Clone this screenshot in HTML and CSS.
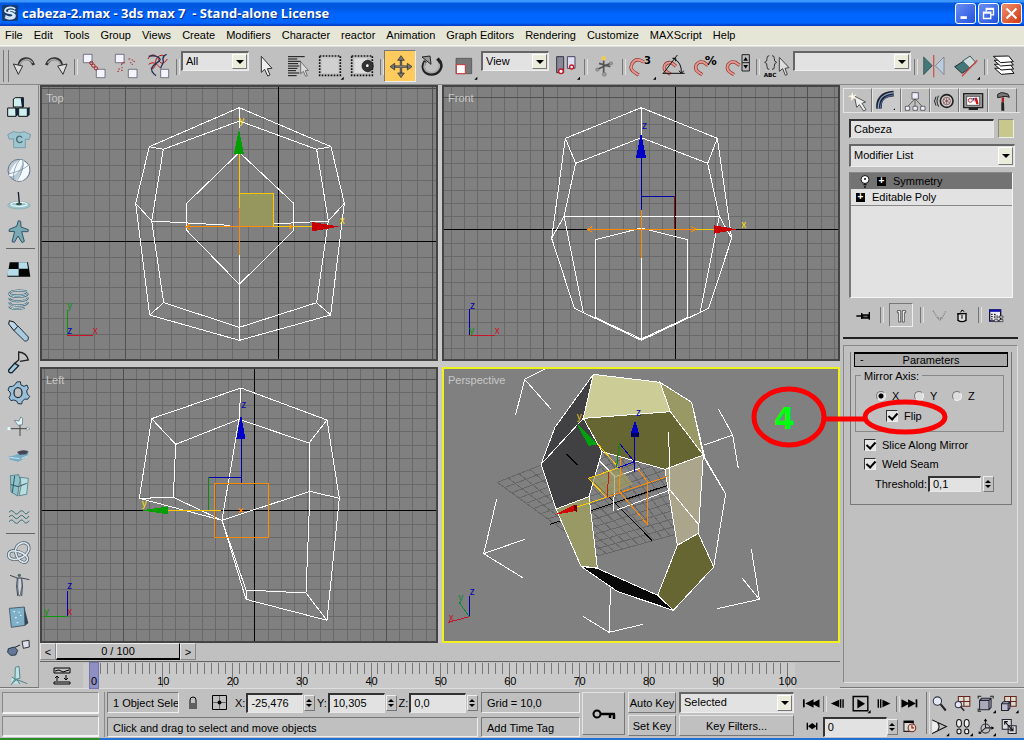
FILE: index.html
```html
<!DOCTYPE html>
<html lang="en">
<head>
<meta charset="utf-8">
<title>cabeza-2.max - 3ds max 7 - Stand-alone License</title>
<link rel="stylesheet" href="styles.css">
</head>
<body>
<div class="app">
  <header class="titlebar">
    <svg class="logo" viewBox="0 0 48 48"><rect width="48" height="48" rx="6" fill="#163c70"/><path d="M40 12C28 3 9 8 9 18c0 9 25 4 25 13 0 8-17 7-24 1M40 21c-8-7-20-6-20-2 0 4 18 3 19 13 0 10-20 13-30 5" fill="none" stroke="#d8e9f5" stroke-width="5"/></svg>
    <h1>cabeza-2.max - 3ds max 7 &nbsp;- Stand-alone License</h1>
    <button class="win" aria-label="Minimize"><svg viewBox="0 0 21 21"><path d="M5 15h7" stroke="#fff" stroke-width="3"/></svg></button>
    <button class="win" aria-label="Restore"><svg viewBox="0 0 21 21"><path d="M8 8V5h8v7h-3M5 9h8v7H5zM8 6h8M5 10h8" fill="none" stroke="#fff" stroke-width="1.5"/></svg></button>
    <button class="win close" aria-label="Close"><svg viewBox="0 0 21 21"><path d="M5 5l11 11M16 5L5 16" stroke="#fff" stroke-width="2.4"/></svg></button>
  </header>
  <nav class="menu">
    <a href="#">File</a><a href="#">Edit</a><a href="#">Tools</a><a href="#">Group</a><a href="#">Views</a><a href="#">Create</a><a href="#">Modifiers</a><a href="#">Character</a><a href="#">reactor</a><a href="#">Animation</a><a href="#">Graph Editors</a><a href="#">Rendering</a><a href="#">Customize</a><a href="#">MAXScript</a><a href="#">Help</a>
  </nav>
  <div class="toolbar">
    <button aria-label="Undo"><svg viewBox="24 147 96 96"><path d="M56 196C60 168 91 165 101 192" fill="none" stroke="#333" stroke-width="9"/><path d="M58 194C64 172 88 170 98 186" fill="none" stroke="#aaa" stroke-width="4"/><path d="M40 189l28 6-13 25z" fill="#ddd" stroke="#333" stroke-width="3"/></svg></button>
    <button aria-label="Redo"><svg viewBox="120 147 96 96"><path d="M186 196C182 168 150 165 139 192" fill="none" stroke="#333" stroke-width="9"/><path d="M183 194C178 172 154 170 143 186" fill="none" stroke="#aaa" stroke-width="4"/><path d="M201 189l-28 6 16 25z" fill="#ddd" stroke="#333" stroke-width="3"/></svg></button>
    <i class="sep"></i>
    <button aria-label="Select and link"><svg viewBox="234 147 96 96"><g fill="#f4f4ff" stroke="#445" stroke-width="2"><path d="M250 160h26v25h-26zM289 205h26v25h-26z"/></g><g fill="none" stroke="#a22" stroke-width="3"><circle cx="274" cy="186" r="5"/><circle cx="280" cy="194" r="5"/><circle cx="288" cy="202" r="5"/></g></svg></button>
    <button aria-label="Unlink selection"><svg viewBox="330 147 96 96"><g fill="#f4f4ff" stroke="#445" stroke-width="2"><path d="M346 160h26v25h-26zM385 205h26v25h-26z"/></g><path d="M364 193q0-10 11-8M385 174h6m4 3h4m-9 8h4m6-4h5m-10 9h4m-44 14h5m-8 7h5m6-3h5m-4-8h4" fill="none" stroke="#a33" stroke-width="3"/></svg></button>
    <button aria-label="Bind to space warp"><svg viewBox="426 147 96 96"><path d="M444 174c10-22 28-10 32 2 4 14 16 14 26-2M452 202c22 4 8-26 22-34 6-6 12-6 18-4M446 190c20-14 28 8 36 10" fill="none" stroke="#b11" stroke-width="3"/><path d="M446 166c14-4 30 0 34 8s-18 12-24 26c-4 8 4 18 12 24M500 160c-12 4-12 14-10 20s-6 12-8 22" fill="none" stroke="#235" stroke-width="4"/><path d="M482 205h24v25h-24z" fill="#f4f4ff" stroke="#445" stroke-width="2"/></svg></button>
    <i class="sep"></i>
    <span class="combo tb"><select aria-label="Selection filter"><option>All</option></select><i></i></span>
    <button aria-label="Select object"><svg viewBox="750 147 96 96"><path d="M784 166v48l10-9 9 20 7-3-8-19 14-1z" fill="#eee" stroke="#333" stroke-width="3"/></svg></button>
    <button aria-label="Select by name"><svg viewBox="846 147 96 96"><path d="M864 167h50M864 174h28M864 181h38M864 188h30M864 195h34M864 202h28M864 209h24M864 216h34M864 224h26" stroke="#111" stroke-width="3"/><path d="M902 182v36l8-7 7 15 5-2-6-15 9-1z" fill="#ddd" stroke="#444" stroke-width="2"/></svg></button>
    <button aria-label="Rectangular selection"><svg viewBox="942 147 96 96"><path d="M959 165h62v58h-62z" fill="#c4c4c4" stroke="#111" stroke-width="5" stroke-dasharray="5 4"/><path d="M966 172h48v44h-48z" fill="#d0d0d0"/><path d="M1031 227v9h-9z" fill="#000"/></svg></button>
    <button aria-label="Window crossing"><svg viewBox="1038 147 96 96"><path d="M1055 165h62v58h-62z" fill="none" stroke="#111" stroke-width="5" stroke-dasharray="5 4"/><path d="M1063 172h38v44h-38z" fill="#ddd"/><circle cx="1103" cy="195" r="17" fill="#333" stroke="#111" stroke-width="2"/><circle cx="1102" cy="194" r="4" fill="#fff"/></svg></button>
    <i class="sep"></i>
    <button class="on" aria-label="Select and move"><svg viewBox="12 147 96 96"><path d="M63 171v52M37 197h52" stroke="#333" stroke-width="7"/><path d="M63 177v40M43 197h40" stroke="#aaa" stroke-width="2"/><path d="M63 164l10 14H53zM63 230l10-14H53zM30 197l14-10v20zM96 197l-14-10v20z" fill="#777" stroke="#222" stroke-width="2"/></svg></button>
    <button aria-label="Select and rotate"><svg viewBox="108 147 96 96"><path d="M136 180c-14 21-2 39 18 39 20 1 33-18 28-31-2-9-5-10-10-15" fill="none" stroke="#222" stroke-width="10"/><path d="M136 184c-9 19 2 31 18 31 17 0 27-15 23-27" fill="none" stroke="#aaa" stroke-width="5"/><path d="M126 168l24-3 3 25z" fill="#999" stroke="#222" stroke-width="3"/></svg></button>
    <button aria-label="Select and scale"><svg viewBox="204 147 96 96"><path d="M228 172h47v46h-47z" fill="#777" stroke="#444" stroke-width="2"/><path d="M229 191h27v27h-27z" fill="#fff" stroke="#c33" stroke-width="3"/><path d="M292 227v9h-9z"/></svg></button>
    <span class="combo tb"><select aria-label="Reference coordinate system"><option>View</option></select><i></i></span>
    <button aria-label="Use pivot point center"><svg viewBox="510 147 96 96"><path d="M530 167h21v48h-21z" fill="#889" stroke="#334" stroke-width="3"/><path d="M562 167h23v35h-23z" fill="#dde" stroke="#446" stroke-width="3"/><g fill="#fff" stroke="#c12" stroke-width="4"><circle cx="543" cy="211" r="7"/><circle cx="575" cy="198" r="6"/></g><path d="M600 227v9h-9z"/></svg></button>
    <i class="sep"></i>
    <button aria-label="Select and manipulate"><svg viewBox="624 147 96 96"><path d="M671 174v42M648 207l45-21M657 187l34 10" stroke="#555" stroke-width="5"/><g fill="#999" stroke="#555"><circle cx="652" cy="206" r="5"/><circle cx="693" cy="187" r="5"/><circle cx="673" cy="220" r="6"/></g><circle cx="671" cy="172" r="7" fill="#ec5"/></svg></button>
    <i class="sep"></i>
    <button aria-label="Snaps toggle"><svg viewBox="738 147 96 96"><g class="magnet"><path d="M792 183l-13-6q-14-4-23 11-9 18 12 29l8 5"/><path d="M792 183l-13-6q-14-4-23 11-9 18 12 29l8 5"/></g><text x="792" y="190" class="snapnum">3</text><path d="M828 227v9h-9z"/></svg></button>
    <button aria-label="Angle snap"><svg viewBox="834 147 96 96"><g class="magnet"><path d="M888 196l-12-10q-13-5-21 6-7 14 9 23l8 4"/><path d="M888 196l-12-10q-13-5-21 6-7 14 9 23l8 4"/></g><path d="M848 217h66M850 217l42-55M880 172q26 12 24 44M877 172h10v9M897 209l7 9 7-9" fill="none" stroke="#111" stroke-width="3"/></svg></button>
    <button aria-label="Percent snap"><svg viewBox="930 147 96 96"><g class="magnet"><path d="M984 193l-13-9q-13-5-22 7-7 16 10 25l8 5"/><path d="M984 193l-13-9q-13-5-22 7-7 16 10 25l8 5"/></g><text x="974" y="192" class="snapnum pct">%</text></svg></button>
    <button aria-label="Spinner snap"><svg viewBox="1026 147 96 96"><g class="magnet"><path d="M1079 193l-13-9q-13-5-22 7-7 16 10 25l8 5"/><path d="M1079 193l-13-9q-13-5-22 7-7 16 10 25l8 5"/></g><path d="M1086 161h22v49h-22zM1086 185h22" fill="#bbb" stroke="#222" stroke-width="3"/><path d="M1090 179l7-11 7 11zM1090 192l7 11 7-11z"/></svg></button>
    <i class="sep"></i>
    <button aria-label="Named selection sets"><svg viewBox="108 147 96 96"><path d="M136 164q-8 0-7 9t-7 11q8 2 7 12t7 9M144 164q8 0 7 9t7 11q-8 2-7 12t-7 9" fill="none" stroke="#333" stroke-width="3"/><text x="119" y="227" class="abc">ABC</text><path d="M166 169v42l10-8 8 20 6-3-7-18 12-2z" fill="#ddd" stroke="#444" stroke-width="3"/></svg></button>
    <span class="combo tb wide"><select aria-label="Named selection"><option></option></select><i></i></span>
    <i class="sep"></i>
    <button aria-label="Mirror"><svg viewBox="582 147 96 96"><path d="M599 168v53l26-27z" fill="#477" stroke="#244" stroke-width="2"/><path d="M660 168v53l-26-27z" fill="#bcd" stroke="#667" stroke-width="2"/><path d="M629 162v67" stroke="#c55" stroke-width="4"/></svg></button>
    <button aria-label="Align"><svg viewBox="678 147 96 96"><path d="M692 197l26-16 20 20-24 16z" fill="#477" stroke="#233" stroke-width="3"/><path d="M716 180l22-15 18 20-20 15z" fill="#cdd" stroke="#455" stroke-width="3"/><path d="M714 226l46-48" stroke="#c44" stroke-width="4"/><path d="M768 227v9h-9z"/></svg></button>
    <i class="sep"></i>
    <button aria-label="Layer manager"><svg viewBox="792 147 96 96"><g fill="#fff" stroke="#111" stroke-width="3"><path d="M812 202l46-2 12 17-38 3z"/><path d="M811 190l46-2 12 16-38 3z"/><path d="M810 178l46-2 12 16-38 3z"/><path d="M808 166l46-1 14 17-38 3z"/></g></svg></button>
  </div>

  <main class="main">
    <aside class="reactor">
      <button aria-label="Rigid body"><svg viewBox="12 24 90 93"><g fill="#cfeff0" stroke="#111" stroke-width="3"><path d="M40 42l6-4h24v28H40zM23 69h25v25H23zM56 69h26v25H56z"/></g><path d="M62 40l9-2v28l-5 2zM46 69l9-1v22l-7 4zM81 69l8-3v24l-8 5z" fill="#123"/></svg></button>
      <button aria-label="Cloth"><svg viewBox="12 117 90 93"><path d="M41 140q16 7 32 0l19 9-5 15-11-2v26H41v-27l-13 2-5-14z" fill="#9fc6d0" stroke="#578a98" stroke-width="2"/><path d="M66 158c-6-9-17-4-16 6s13 12 17 4" fill="none" stroke="#476b78" stroke-width="4"/></svg></button>
      <button aria-label="Soft body"><svg viewBox="12 210 90 93"><circle cx="57" cy="256" r="33" fill="#b9cad4" stroke="#678" stroke-width="3"/><path d="M58 224q-27 22-31 48 24 10 44-46zM70 227q8 22-23 60l20 0q24-14 20-45z" fill="#f5f8ff"/><path d="M26 266q35-5 62-27M60 223q-20 24-20 60M68 225q6 29-17 62" fill="none" stroke="#689" stroke-width="2"/></svg></button>
      <button aria-label="Rope"><svg viewBox="12 303 90 93"><ellipse cx="57" cy="361" rx="34" ry="11" fill="#9bc5cd" stroke="#688"/><ellipse cx="57" cy="358" rx="24" ry="6" fill="none" stroke="#e5f6f6" stroke-width="4"/><path d="M55 321l3 34" stroke="#123" stroke-width="4"/><ellipse cx="57" cy="357" rx="9" ry="4" fill="#354"/></svg></button>
      <button aria-label="Deforming mesh"><svg viewBox="12 396 90 93"><path d="M55 407l7 2 1 17 22 8-1 6-19 0 8 29-7 4-12-20-11 19-7-2 8-30-17-1 1-6 22-9z" fill="#78a9b4" stroke="#356" stroke-width="3"/></svg></button>
      <i class="hsep"></i>
      <button aria-label="Plane"><svg viewBox="12 507 90 93"><path d="M29 532h55l7 43H22z" fill="#050505"/><path d="M56 532h25l3 19H56zM25 552h31v20H22z" fill="#b5dce8"/></svg></button>
      <button aria-label="Spring"><svg viewBox="12 600 90 93"><g fill="none" stroke="#356" stroke-width="6"><path d="M80 619c-30-6-52 0-52 7s50 8 54-3M28 626c0 14 54 12 56-1M28 639c0 14 54 12 56-1M28 652c0 14 54 12 56-1M28 664c2 10 34 10 46 4"/></g><g fill="none" stroke="#bcdde4" stroke-width="3"><path d="M80 619c-30-6-52 0-52 7s50 8 54-3M28 626c0 14 54 12 56-1M28 639c0 14 54 12 56-1M28 652c0 14 54 12 56-1M28 664c2 10 34 10 46 4"/></g></svg></button>
      <button aria-label="Linear dashpot"><svg viewBox="12 693 90 93"><path d="M28 707l14 4 12 14-12 12-16-20z" fill="#bbd5ea" stroke="#111" stroke-width="3"/><path d="M54 723l31 33q1 14-11 12l-32-31z" fill="#a9cbdc" stroke="#234" stroke-width="3"/></svg></button>
      <button aria-label="Angular dashpot"><svg viewBox="12 -39 90 93"><path d="M42 12l14-12v-24q24 2 29 24L60 4" fill="none" stroke="#222" stroke-width="4"/><path d="M26 30l18-20 12 7-20 21q-12 2-10-8z" fill="#a9cbdc" stroke="#123" stroke-width="4"/></svg></button>
      <button aria-label="Motor"><svg viewBox="12 54 90 93"><path d="M50 66l11-1 2 10 9 4 9-4 4 10-5 8 2 9 7 7-6 9-9-1-7 7-2 8-11-1-4-8-9-3-8 2-6-9 5-9-2-8-6-6 4-10 10-1 8-6z" fill="#98bed8" stroke="#234" stroke-width="3"/><ellipse cx="54" cy="98" rx="12" ry="15" fill="#c0c0c0" stroke="#234" stroke-width="4"/></svg></button>
      <button aria-label="Wind"><svg viewBox="12 147 90 93"><path d="M24 206h64M60 191v37" stroke="#444" stroke-width="3"/><path d="M43 181l14 2 5-12 6 4-1 19-13 2z" fill="#dff5f6" stroke="#567" stroke-width="2"/><circle cx="27" cy="206" r="5" fill="#dff"/><path d="M80 201l10 5-10 5z" fill="#dff" stroke="#555"/></svg></button>
      <button aria-label="Toy car"><svg viewBox="12 240 90 93"><path d="M26 289q24-1 34-14l25-1q3 9-8 19l-22 12-25-6z" fill="#79abc2"/><path d="M51 276q17-9 34-2l-6 9-20 1z" fill="#445"/><path d="M29 292l30 4M65 296l16-7" stroke="#b8dcec" stroke-width="4"/></svg></button>
      <button aria-label="Fracture"><svg viewBox="12 333 90 93"><path d="M31 347l25-3 5 16-4 14-4 34-20-12z" fill="#8fc3c8" stroke="#367" stroke-width="2"/><path d="M61 352l24 3-5 48-23 4 6-27z" fill="#b9dede" stroke="#367" stroke-width="2"/><path d="M33 374l22 6 25-10M44 348l-7 50" stroke="#356" stroke-width="3" fill="none"/></svg></button>
      <button aria-label="Water"><svg viewBox="12 426 90 93"><path d="M27 457q8-10 15 0t15 0 15 0 15-3M27 471q8-10 15 0t15 0 15 0 15-3M27 485q8-10 15 0t15 0 15 0 15-3" fill="none" stroke="#346a72" stroke-width="3"/></svg></button>
      <i class="hsep"></i>
      <button aria-label="Torus knot"><svg viewBox="12 537 90 93"><g fill="none" stroke="#456" stroke-width="9"><path d="M26 585c-1 27 63 8 61-22-2-26-46-15-40 15 5 25 29 39 35 22 7-20-58-42-56-15z"/></g><path d="M26 585c-1 27 63 8 61-22-2-26-46-15-40 15 5 25 29 39 35 22 7-20-58-42-56-15z" fill="none" stroke="#dce8ec" stroke-width="5"/></svg></button>
      <button aria-label="Ragdoll"><svg viewBox="12 630 90 93"><circle cx="58" cy="646" r="5" fill="#566"/><path d="M30 646l22 8h13l23 5M52 654l-2 26 3 28M65 654l2 26-2 28M50 679h18" fill="none" stroke="#445" stroke-width="3"/><path d="M54 655h10l2 23-6 30-4-1-3-28z" fill="#c6d4da" stroke="#445" stroke-width="2"/></svg></button>
      <button aria-label="Analyze world"><svg viewBox="12 723 90 93"><path d="M28 745l45-4 2 55-41 6z" fill="#7fb0c8" stroke="#234" stroke-width="2"/><path d="M73 741l12 48-10 8z" fill="#345"/><path d="M40 755h5m10 2h4m-14 16h5m10-7h4m-14 22h5" stroke="#def" stroke-width="4"/></svg></button>
      <button aria-label="Preview animation"><svg viewBox="12 816 90 93"><path d="M25 866l18-5 10 10-6 14-15 1-9-9z" fill="#679" stroke="#234" stroke-width="3"/><path d="M45 862l15-7" stroke="#123" stroke-width="3"/><path d="M66 844l21-3 1 20-18 4z" fill="#dde" stroke="#333" stroke-width="3"/></svg></button>
      <button aria-label="Create animation"><svg viewBox="12 909 90 93"><path d="M46 922l11-3 3 36-15 3zM35 951l10 6-12 18M46 957l36 14M36 969l15-10 8 13" fill="#bce4ea" stroke="#588" stroke-width="3"/></svg></button>
    </aside>

    <section class="center">
      <div class="views">
        <div class="view"><span>Top</span>
          <svg class="scene" viewBox="-264 6 1182 816" preserveAspectRatio="xMidYMid slice">
            <g class="grid" data-x="445" data-y="469" data-step="46.1"></g>
            <g class="wire"><path d="M328 68L603 185 643 355 602 690 328 766 59 690 17 355 58 185zM328 108L560 193 595 408 560 653 328 727 101 653 65 408 100 193zM328 202L491 355v81L328 598 170 436V355zM58 185l42 8M603 185l-43 8M17 355l48 53M643 355l-48 53M59 690l42-37M602 690l-42-37M65 408l235 13M355 421l240-13M328 68v60M328 510v256"/></g>
            <path d="M328 325h101v98H328z" fill="#96965f" stroke="#ffc800" class="ln"/>
            <g class="ln"><path d="M328 205v165M429 425h117" stroke="#ffc800"/><path d="M328 370v140M168 425h262M180 417l-12 8 12 8M476 417l12 8-12 8" stroke="#ff8c00"/></g>
            <path d="M327 132l15 75h-30z" fill="#00a000"/><path d="M546 411v28l82-14z" fill="#c80000"/>
            <text x="328" y="118" fill="#ffe000">y</text><text x="629" y="418" fill="#ffe000">x</text>
            <g class="ln"><path d="M-188 750v-75" stroke="#0a960a"/><path d="M-188 750h76" stroke="#c81428"/></g>
            <text x="-188" y="672" fill="#0a960a">y</text><text x="-112" y="748" fill="#c81428">x</text><text x="-188" y="748" fill="#0000c0">z</text>
          </svg></div>
        <div class="view"><span>Front</span>
          <svg class="scene" viewBox="12 6 1182 816" preserveAspectRatio="xMidYMid slice">
            <g class="grid" data-x="706" data-y="433" data-step="39.6"></g>
            <g class="wire"><path d="M604 68L832 160 875 460 806 670 604 766 403 670 335 460 376 160zM604 158L803 235 838 394 780 684M604 158L407 235 372 394 430 684M372 394h466M376 160l31 75M832 160l-29 75M335 460l37-66M875 460l-37-66M604 68v90M604 520v242L467 698V464l137-35 138 35v234L604 762"/></g>
            <g class="ln"><path d="M604 215v160M604 334h100" stroke="#0000a8"/><path d="M704 334v98" stroke="#900c18"/><path d="M604 375v145M442 433h326M456 425l-14 8 14 8M754 425l14 8-14 8" stroke="#ff8c00"/><path d="M768 433h54" stroke="#ffc800"/></g>
            <path d="M603 142l15 76h-30z" fill="#0000c8"/><path d="M822 421v25l70-13z" fill="#c80000"/>
            <text x="606" y="131" fill="#0000b0">z</text><text x="904" y="430" fill="#ffe000">x</text>
            <g class="ln"><path d="M88 750v-77" stroke="#0000b0"/><path d="M88 750h76" stroke="#c81428"/></g>
            <text x="90" y="671" fill="#0000b0">z</text><text x="164" y="746" fill="#c81428">x</text><text x="88" y="746" fill="#0a960a">y</text>
          </svg></div>
        <div class="view"><span>Left</span>
          <svg class="scene" viewBox="126 27 1182 816" preserveAspectRatio="xMidYMid slice">
            <g class="grid" data-x="763" data-y="451" data-step="39.5"></g>
            <g class="wire"><path d="M723 84L455 176 418 415 666 481 738 718 981 781 1018 415 981 180zM717 178L527 253 520 412 666 481 930 394 927 249zM455 176l72 77M418 415l102-3M981 180l-54 69M1018 415l-88-21M723 84l-6 94-51 303M930 394l-12 305 63 82M738 690l180 9M666 481l72 209v28"/></g>
            <g class="ln"><path d="M723 232v138M626 352h97" stroke="#0000b0"/><path d="M626 352v98" stroke="#0a8a0a"/><path d="M643 370h162v162H643zM717 445l12 12M729 445l-12 12" stroke="#ff8c00"/><path d="M503 451h160" stroke="#ffc800"/></g>
            <path d="M723 162l13 75h-27z" fill="#0000c8"/><path d="M425 451l80-12v24z" fill="#00a000"/>
            <text x="724" y="145" fill="#0000b0">z</text><text x="425" y="442" fill="#ffe000">y</text>
            <g class="ln"><path d="M202 769v-77" stroke="#0000b0"/><path d="M202 769h-69" stroke="#0a960a"/></g>
            <text x="202" y="688" fill="#0000b0">z</text><text x="202" y="764" fill="#c81428">x</text><text x="132" y="764" fill="#0a960a">y</text>
          </svg></div>
        <div class="view active"><span>Perspective</span>
          <svg class="scene" viewBox="12 12 1182 816" preserveAspectRatio="xMidYMid slice">
            <clipPath id="floor"><path d="M150 120H680L715 520V600H150z"/></clipPath>
            <g class="floor" clip-path="url(#floor)"></g>
            <path d="M330 478l350-116M380 268l257 259" class="ln" stroke="#000"/>
            <g class="faces">
              <path d="M460 28L430 160 303 298 345 187z" fill="#414143"/>
              <path d="M430 160L486 260 447 395 348 432 303 298z" fill="#414143"/>
              <path d="M460 28L660 52 691 140 430 160z" fill="#cccc97"/>
              <path d="M660 52L755 112 790 270 691 140z" fill="#999966"/>
              <path d="M430 160L691 140 790 270 675 313 486 260z" fill="#666633"/>
              <path d="M348 432L447 395 472 608 423 604z" fill="#999966"/>
              <path d="M675 313L790 270 775 505 712 541z" fill="#aba58c"/>
              <path d="M712 541L775 505 821 606 700 736 653 691z" fill="#666633"/>
              <path d="M423 604L472 610 653 691 700 736 533 680z" fill="#080808"/>
            </g>
            <g class="wire"><path d="M755 112L796 285 857 387 821 606M790 270L857 387M318 10L254 43 227 149M254 43l78 88M836 133l42 77 17 100M878 210l-85 30M170 403L131 566l123-43M131 566l117 72M429 754l78 48 102-24M507 802l5-134M934 552l24 151-126 28M958 703l-51-63M686 200l4 175 87 105M690 375L530 435M430 160L303 298M480 290l45 45-5 103M525 335l75-25"/></g>
            <path d="M380 268l33 33" class="ln" stroke="#000"/>
            <path d="M445 340l90-32 45 48-82 40z" fill="#a09c5e" opacity=".7"/>
            <g class="ln"><path d="M474 238l62 70-91 32 53 56M408 427l90-30" stroke="#ffc800"/><path d="M498 397l182-62M543 275l-5 105 84 98V350l-30-40" stroke="#ff8c00"/><path d="M583 320V215M583 290l-48 18M583 290l-43-53" stroke="#0000b8"/><path d="M538 235l-8 72" stroke="#0a8a0a"/><path d="M506 320l-4 75" stroke="#c02010"/></g>
            <path d="M585 165l12 40v12h-25v-12z" fill="#0000c8"/><path d="M572 205h25v12h-25z" fill="#000060"/><path d="M412 178l62 60-29 5z" fill="#00a010"/><path d="M345 449l60-31 4 20z" fill="#d00808"/><path d="M402 419l8 2v19l-8-2z" fill="#700"/>
            <text x="588" y="154" fill="#0000b0">z</text><text x="410" y="166" fill="#e8c020">y</text>
            <g class="ln"><path d="M88 755v-62" stroke="#0000b0"/><path d="M88 755l-63 17" stroke="#c81428"/><path d="M88 755l-31-44" stroke="#0a8a3a"/></g>
            <text x="89" y="690" fill="#0000b0">z</text><text x="26" y="768" fill="#c81428">x</text><text x="55" y="708" fill="#0a8a3a">y</text>
          </svg></div>
      </div>
      <div class="slider"><button aria-label="Previous frame">&lt;</button><button class="thumb">0 / 100</button><button aria-label="Next frame">&gt;</button></div>
      <div class="track">
        <button class="curve" aria-label="Open mini curve editor"><svg viewBox="0 0 18 18"><path d="M1 1h16v5H1zM1 15h16v2H1zM4 14V9m-2 2l2-2 2 2M13 8v5m-2-2l2 2 2-2M2 4l4-1 4 2 6-2" fill="none" stroke="#000"/></svg></button>
        <div class="ruler"></div>
      </div>
    </section>

    <aside class="panel">
      <div class="tabs">
        <button aria-label="Create"><svg viewBox="9 9 87 72"><path d="M43 30l34 18-11 4 12 19-7 4-13-19-8 8z" fill="#eee" stroke="#555" stroke-width="3"/><path d="M37 18l3 11 10-5-6 9 5 7-9-3-6 8 0-11-10-3 10-3z" fill="#fffbe8"/></svg></button>
        <button class="sel" aria-label="Modify"><svg viewBox="96 9 87 72"><path d="M117 68C115 40 128 25 161 23" fill="none" stroke="#223" stroke-width="17"/><path d="M115 68C114 40 126 24 161 20" fill="none" stroke="#8ac" stroke-width="4"/><path d="M121 68C121 45 134 30 161 27" fill="none" stroke="#57a" stroke-width="3"/><path d="M165 67v5h-5z"/></svg></button>
        <button aria-label="Hierarchy"><svg viewBox="183 9 87 72"><path d="M225 38L203 62M225 38v22M225 38l22 24" stroke="#333" stroke-width="2"/><g fill="#eef" stroke="#333" stroke-width="2"><path d="M216 20h19v19h-19zM196 61h13v12h-13zM219 61h13v12h-13zM242 61h13v12h-13z"/></g></svg></button>
        <button aria-label="Motion"><svg viewBox="270 9 87 72"><circle cx="320" cy="45" r="19" fill="#ccc" stroke="#222" stroke-width="5"/><circle cx="320" cy="45" r="11" fill="#ddd" stroke="#622" stroke-width="2"/><path d="M320 36v18M312 40l16 10M328 40l-16 10" stroke="#733" stroke-width="2"/><path d="M296 29q-10 15 0 33M288 32q-9 13 0 27" fill="none" stroke="#222" stroke-width="3"/></svg></button>
        <button aria-label="Display"><svg viewBox="357 9 87 72"><path d="M371 23h57v42h-57z" fill="#999" stroke="#222" stroke-width="4"/><path d="M380 31h39v27h-39z" fill="#fff" stroke="#222" stroke-width="2"/><circle cx="391" cy="43" r="6" fill="#fff" stroke="#b33" stroke-width="3"/><path d="M403 35h8l5 20h-7z" fill="#c11"/><path d="M397 36h6v12z" fill="#228"/><path d="M386 69h28" stroke="#222" stroke-width="6"/></svg></button>
        <button aria-label="Utilities"><svg viewBox="444 9 87 72"><path d="M473 25q10-9 24-3 9 0 11 12-11-5-19-2l-16 3z" fill="#777" stroke="#222" stroke-width="3"/><path d="M485 34h7v15h-7z" fill="#a22"/><path d="M484 49h8l1 25h-9z" fill="#222"/></svg></button>
      </div>
      <div class="namerow"><input type="text" aria-label="Object name" value="Cabeza"><button class="swatch" aria-label="Object color"></button></div>
      <span class="combo modlist"><select aria-label="Modifier list"><option>Modifier List</option></select><i></i></span>
      <ul class="stack">
        <li class="cur"><svg class="bulb" viewBox="0 0 10 13"><circle cx="5" cy="4.500" r="4" fill="#fff" stroke="#111"/><path d="M5 3v2M3.500 9.500h3M4 12h2" stroke="#111" stroke-width="1.500"/></svg><b>+</b>Symmetry</li>
        <li><b>+</b>Editable Poly</li>
      </ul>
      <div class="stacktools">
        <button aria-label="Pin stack"><svg viewBox="45 657 54 54"><path d="M49 687h16M65 678v18M68 684h17v9H68zM88 675v23" stroke="#000" stroke-width="4" fill="#666"/></svg></button><i class="sep"></i>
        <button class="down" aria-label="Show end result"><svg viewBox="155 657 54 54"><path d="M171 671h10v34h-6v-28h-4zM196 671h-10v34h6v-28h4z" fill="#fff" stroke="#222" stroke-width="2"/></svg></button><i class="sep"></i>
        <button aria-label="Make unique"><svg viewBox="262 657 54 54"><path d="M271 671l14 22 7 6 6-6 12-22M285 693h14" fill="none" stroke="#888" stroke-width="4" stroke-dasharray="4 3"/></svg></button>
        <button aria-label="Remove modifier"><svg viewBox="331 657 54 54"><path d="M346 680h24v20q-12 8-24 0z" fill="#ddd" stroke="#000" stroke-width="4"/><path d="M344 681l28-2M354 676l4-7 7 5" stroke="#000" stroke-width="3" fill="none"/><path d="M358 684v11" stroke="#333" stroke-width="4"/></svg></button><i class="sep"></i>
        <button aria-label="Configure modifier sets"><svg viewBox="442 657 54 54"><path d="M450 669h33v33h-33z" fill="#eee" stroke="#114" stroke-width="4"/><path d="M449 671h35" stroke="#11a" stroke-width="7"/><path d="M454 682h5m4 0h5m-14 7h5m-5 7h5" stroke="#000" stroke-width="3"/><path d="M464 687h11v6h-11zM479 687h11v6h-11zM464 698h11v6h-11zM479 698h11v6h-11z" fill="#ddd" stroke="#222" stroke-width="2"/></svg></button>
      </div>
      <div class="rollouts">
        <section class="rollout">
          <button class="head"><span>-</span>Parameters</button>
          <fieldset><legend>Mirror Axis:</legend>
            <div class="axes"><label><input type="radio" name="axis" checked>X</label><label><input type="radio" name="axis">Y</label><label><input type="radio" name="axis">Z</label></div>
            <label class="flip"><input type="checkbox" checked>Flip</label>
          </fieldset>
          <label class="opt"><input type="checkbox" checked>Slice Along Mirror</label>
          <label class="opt"><input type="checkbox" checked>Weld Seam</label>
          <div class="thresh"><label for="th">Threshold:</label><input id="th" type="text" value="0,1"><button class="spin" aria-label="Adjust threshold"></button></div>
        </section>
      </div>
    </aside>

    <svg class="callout" viewBox="750 385 198 66"><g fill="none" stroke="#fa0000" stroke-width="5"><ellipse cx="789" cy="417" rx="35" ry="28"/><path d="M825 419h39"/><ellipse cx="905" cy="417" rx="40" ry="15"/></g><text x="774" y="429">4</text></svg>
  </main>

  <footer class="status">
    <div class="listener"><input type="text" aria-label="Macro recorder"><input type="text" aria-label="Listener"></div>
    <div class="info">
      <div class="coords">
        <output>1 Object Sele</output>
        <button aria-label="Lock selection"><svg viewBox="0 0 12 14"><path d="M3 7V4q0-3 3-3t3 3v3" fill="none" stroke="#000"/><path d="M2 8h8M2 10h8M2 12h8" stroke="#000"/></svg></button>
        <button class="abs" aria-label="Absolute mode"><svg viewBox="0 0 15 15"><path d="M.5 .5h14v14H.5z" fill="none" stroke="#000"/><path d="M7.500 1v13M1 7.500h13" stroke="#666"/><circle cx="7.500" cy="7.500" r="2"/></svg></button>
        <label for="cx">X:</label><input id="cx" type="text" value="-25,476"><button class="spin" aria-label="Adjust X"></button>
        <label for="cy">Y:</label><input id="cy" type="text" value="10,305"><button class="spin" aria-label="Adjust Y"></button>
        <label for="cz">Z:</label><input id="cz" type="text" value="0,0"><button class="spin" aria-label="Adjust Z"></button>
      </div>
      <p class="box">Click and drag to select and move objects</p>
    </div>
    <div class="gridinfo"><p class="box">Grid = 10,0</p><p class="box">Add Time Tag</p></div>
    <button class="key raised" aria-label="Set keys"><svg viewBox="0 0 24 12"><circle cx="5" cy="6" r="3.500" fill="none" stroke="#000" stroke-width="2"/><path d="M9 6h14M18 6v4M22 6v5" stroke="#000" stroke-width="2.500"/></svg></button>
    <div class="keys"><button class="raised">Auto Key</button><button class="raised">Set Key</button></div>
    <div class="filters"><span class="combo"><select aria-label="Key selection"><option>Selected</option></select><i></i></span><button class="raised">Key Filters...</button></div>
    <div class="play">
      <div>
        <button aria-label="Go to start"><svg viewBox="924 152 66 66"><path d="M935 173v23" stroke="#000" stroke-width="5"/><path d="M963 173v24l-24-12zM980 173v24l-22-12z"/></svg></button><i class="sep"></i>
        <button aria-label="Previous frame"><svg viewBox="999 152 66 66"><path d="M1037 174v22l-24-11z"/><path d="M1041 173v24M1048 173v24" stroke="#000" stroke-width="4"/></svg></button>
        <button aria-label="Play"><svg viewBox="1065 152 66 66"><path d="M1077 165h42v41h-42z" fill="none" stroke="#000" stroke-width="4"/><path d="M1089 172v27l22-13z"/><path d="M1127 204v9h-9z"/></svg></button>
        <button aria-label="Next frame"><svg viewBox="1129 152 66 66"><path d="M1159 174v22l23-11z"/><path d="M1147 173v24M1154 173v24" stroke="#000" stroke-width="4"/></svg></button><i class="sep"></i>
        <button aria-label="Go to end"><svg viewBox="1207 152 66 66"><path d="M1260 173v23" stroke="#000" stroke-width="5"/><path d="M1217 173v24l24-12zM1236 173v24l22-12z"/></svg></button>
      </div>
      <div>
        <button aria-label="Key mode"><svg viewBox="924 217 66 66"><path d="M945 239v20M972 239v20" stroke="#000" stroke-width="4"/><path d="M959 240v18l-12-9zM959 240v18l12-9z"/></svg></button>
        <input type="text" aria-label="Current frame" value="0"><button class="spin" aria-label="Adjust frame"></button>
        <button aria-label="Time configuration"><svg viewBox="1219 217 66 66"><path d="M1236 234h27v30h-27z" fill="#ddd" stroke="#222" stroke-width="3"/><path d="M1236 237h27" stroke="#000" stroke-width="6"/><circle cx="1259" cy="254" r="11" fill="#ddc" stroke="#822" stroke-width="3"/><path d="M1259 246v8h6" fill="none" stroke="#822" stroke-width="3"/></svg></button>
      </div>
    </div>
    <i class="sep tall"></i>
    <div class="nav">
      <button aria-label="Zoom"><svg viewBox="1290 152 66 66"><circle cx="1317" cy="178" r="12" fill="#e4e8f4" stroke="#334" stroke-width="3"/><path d="M1326 187l15 18" stroke="#222" stroke-width="6"/></svg></button>
      <button aria-label="Zoom all"><svg viewBox="1356 152 66 66"><path d="M1377 165h33v28h-33zM1393 165v28M1377 179h33" fill="#ddc" stroke="#622" stroke-width="3"/><circle cx="1377" cy="188" r="9" fill="#e4e8f4" stroke="#334" stroke-width="3"/><path d="M1384 195l10 11" stroke="#222" stroke-width="4"/></svg></button>
      <button aria-label="Zoom extents"><svg viewBox="1422 152 66 66"><path d="M1438 176l6-6h27v26l-6 7h-27zM1438 176h27v27M1465 176l6-6" fill="#aab" stroke="#223" stroke-width="3"/><path d="M1434 171v-7h9M1468 164h9v7M1434 199v8h8" fill="none" stroke="#222" stroke-width="3"/><path d="M1485 204v9h-9z"/></svg></button>
      <button aria-label="Zoom extents all"><svg viewBox="1489 152 66 66"><path d="M1511 165h33v28h-33zM1528 165v28M1511 179h33" fill="#ddc" stroke="#622" stroke-width="3"/><path d="M1502 186l5-6h19v18l-5 7h-19zM1502 186h19v19M1521 186l5-6" fill="#bbc" stroke="#223" stroke-width="3"/><path d="M1551 204v9h-9z"/></svg></button>
      <button aria-label="Field of view"><svg viewBox="1290 217 66 66"><path d="M1302 231l41 19-41 20M1318 239q8 11 0 22" fill="none" stroke="#111" stroke-width="3"/><path d="M1302 234l13 6q7 10 0 21l-13 7z" fill="#eee"/><path d="M1351 269v9h-9z"/></svg></button>
      <button aria-label="Walk through"><svg viewBox="1356 217 66 66"><g fill="#eee" stroke="#111" stroke-width="3"><ellipse cx="1379" cy="241" rx="7" ry="11"/><ellipse cx="1379" cy="264" rx="6" ry="7"/><ellipse cx="1401" cy="241" rx="7" ry="11"/><ellipse cx="1401" cy="264" rx="6" ry="7"/></g><path d="M1419 269v9h-9z"/></svg></button>
      <button aria-label="Arc rotate"><svg viewBox="1422 217 66 66"><path d="M1455 230v24h22M1455 254l-16 14" fill="none" stroke="#222" stroke-width="3"/><circle cx="1455" cy="256" r="13" fill="none" stroke="#334" stroke-width="3"/><path d="M1450 235l5-8 5 8zM1472 249l8 5-8 5zM1436 263l-1 8 9 0z"/><path d="M1485 269v9h-9z"/></svg></button>
      <button aria-label="Maximize viewport"><svg viewBox="1489 217 66 66"><path d="M1504 230h26v28h-26zM1521 248h23v22h-23z" fill="#ddd" stroke="#223" stroke-width="3"/><path d="M1512 237l22 24M1511 245v-9h9M1535 252v10h-10" fill="none" stroke="#111" stroke-width="3"/></svg></button>
    </div>
  </footer>
  <div class="taskbar"></div>
</div>
<script src="scene.js"></script>
</body>
</html>
```
FILE: scene.js
```js
// Construction grids of the orthographic views, in scene units (3 per screen pixel).
const NS = 'http://www.w3.org/2000/svg';

function addPath(parent, d, cls) {
  const p = document.createElementNS(NS, 'path');
  p.setAttribute('d', d);
  p.setAttribute('class', cls);
  parent.appendChild(p);
}

document.querySelectorAll('.grid').forEach(g => {
  const x = +g.dataset.x, y = +g.dataset.y, step = +g.dataset.step;
  let minor = '', major = '';
  for (let i = -24; i <= 24; i++) {
    const gx = Math.round((x + i * step) / 3) * 3 + 1.5;
    const gy = Math.round((y + i * step) / 3) * 3 + 1.5;
    const d = `M${gx} -300V1200M-500 ${gy}H1600`;
    if (i === 0) continue;
    if (i % 10 === 0) major += d; else minor += d;
  }
  addPath(g, minor, 'minor');
  addPath(g, major, 'major');
  addPath(g, `M${x} -300V1200M-500 ${y}H1600`, 'origin');
});

// Ground plane of the perspective view.
const floor = document.querySelector('.floor');
const A = [172, 352], B = [630, 172], C = [475, 572], D = [810, 480], N = 14;
const mix = (p, q, t) => [p[0] + (q[0] - p[0]) * t, p[1] + (q[1] - p[1]) * t];
let lines = '';
for (let i = 0; i <= N; i++) {
  const t = i / N;
  lines += `M${mix(A, B, t)}L${mix(C, D, t)}M${mix(A, C, t)}L${mix(B, D, t)}`;
}
addPath(floor, lines, 'minor');

// Time ruler: a tick for each frame, a number each ten.
const ruler = document.querySelector('.ruler');
for (let f = 0; f <= 100; f++) {
  const t = document.createElement('i');
  if (f % 10 === 0) {
    t.className = 'ten';
    t.dataset.frame = f;
    const n = document.createElement('span');
    n.textContent = f;
    t.appendChild(n);
  }
  ruler.appendChild(t);
}
```
FILE: styles.css
```css
* { box-sizing: border-box; }
body { margin: 0; font: 11px/14px "Liberation Sans", Arial, sans-serif; color: #000; background: #c0c0c0; }
button, input, select { font: inherit; color: inherit; margin: 0; padding: 0; border: 0; border-radius: 0; background: none; appearance: none; }
button { display: flex; align-items: center; justify-content: center; flex: none; }
p, h1, ul { margin: 0; padding: 0; }
svg { display: block; flex: none; }
.app { display: flex; flex-direction: column; height: 100vh; min-width: 1024px; min-height: 740px; overflow: hidden; }

.titlebar { display: flex; align-items: center; gap: 2px; height: 26px; flex: none; padding: 0 2px; background: linear-gradient(#3c96ff 0 2px, #0058e0 3px 8px, #0066ff 14px 23px, #0040c8 25px); }
.titlebar h1 { flex: 1; padding-left: 2px; font: bold 13px/20px "Open Sans", "Noto Sans", sans-serif; color: #fff; text-shadow: 1px 1px #0a2c80; white-space: nowrap; }
.logo { width: 16px; height: 16px; }
.win { width: 21px; height: 21px; border: 1px solid #fff; border-radius: 3px; background: linear-gradient(135deg, #6a8ef5, #2152dc); }
.win svg { width: 19px; height: 19px; }
.win.close { background: linear-gradient(135deg, #f09070, #d03810); }

.menu { display: flex; gap: 11px; height: 20px; flex: none; padding: 2px 5px 0; background: #e6e6d6; border-bottom: 1px solid #f6f6f0; }
.menu a { color: #000; text-decoration: none; white-space: nowrap; }

.toolbar { position: relative; display: flex; align-items: flex-start; height: 39px; flex: none; padding: 3px 0 0 8px; border-top: 1px solid #ddd; border-bottom: 1px solid #888; background: #c0c0c0; }
.toolbar::before { content: ""; position: absolute; left: 3px; top: 3px; width: 4px; height: 32px; border-left: 1px solid #777; border-right: 1px solid #777; }
.toolbar button { width: 32px; height: 32px; }
.toolbar svg { width: 32px; height: 32px; }
.toolbar .on { background: #ffcb5e; border: 1px solid #777; border-color: #777 #eee #eee #777; }
.sep { width: 6px; height: 16px; flex: none; }
.sep::after { content: ""; display: block; width: 2px; height: 100%; margin: 0 2px; border-left: 1px solid #777; border-right: 1px solid #e0e0e0; }
.toolbar .sep { margin-top: 9px; }
.magnet path { fill: none; stroke: #833; stroke-width: 10; }
.magnet path + path { stroke: #e8968c; stroke-width: 6; }
.snapnum { font: bold 30px "DejaVu Sans", sans-serif; }
.pct { font-size: 36px; }
.abc { font: bold 17px "DejaVu Sans", sans-serif; }

.combo { position: relative; display: block; height: 20px; }
.combo select { width: 100%; height: 100%; padding: 0 18px 2px 3px; background: #e2e2e2; border: 1px solid #eee; border-top: 2px solid #666; border-left: 2px solid #666; }
.combo i { position: absolute; right: 2px; top: 3px; bottom: 2px; width: 15px; background: #ececdc; border: 1px solid #fff; border-right-color: #777; border-bottom-color: #777; pointer-events: none; }
.combo i::after { content: ""; position: absolute; left: 3px; top: calc(50% - 2px); border: 4px solid transparent; border-top-color: #000; border-bottom: 0; }
.tb { width: 68px; margin: 1px; }
.tb.wide { width: 118px; }

.main { position: relative; display: grid; grid-template-columns: 40px 1fr 184px; flex: 1; min-height: 0; }
.reactor { display: flex; flex-direction: column; min-height: 0; overflow: hidden; margin-right: 1px; padding: 8px 0 0 4px; border-right: 1px solid #888; border-bottom: 1px solid #777; background: #c4c4c4; }
.reactor button { width: 30px; height: 31px; }
.reactor svg { width: 30px; height: 31px; }
.hsep { height: 6px; flex: none; margin: 0 3px 0 2px; border-top: 1px solid #666; border-bottom: 5px solid transparent; }

.center { display: flex; flex-direction: column; min-width: 0; min-height: 0; }
.views { display: grid; grid-template: 1fr 1fr / 1fr 1fr; gap: 6px 4px; flex: 1; min-height: 0; background: #c8c8c8; }
.view { position: relative; min-width: 0; min-height: 0; overflow: hidden; border: 2px solid #444; background: #808080; }
.view.active { border-color: #f0f01e; }
.view span { position: absolute; left: 4px; top: 4px; color: #c8c8c8; z-index: 1; }
.scene { position: absolute; inset: 0; width: 100%; height: 100%; shape-rendering: crispEdges; }
.scene path { vector-effect: non-scaling-stroke; }
.scene text { font: 30px "Liberation Sans", Arial, sans-serif; }
.wire, .faces { stroke: #fff; }
.wire, g.ln, path.ln:not([fill]), .floor { fill: none; }
.minor { stroke: #696969; }
.major { stroke: #505050; }
.origin { stroke: #000; }
.floor .minor { stroke: #666; }

.slider { display: flex; height: 17px; flex: none; }
.slider button { width: 16px; border: 1px solid #888; border-color: #e4e4e4 #888 #888 #e4e4e4; }
.slider .thumb { width: 124px; border: 1px solid #000; border-color: #eee #000 #000 #eee; border-bottom-width: 2px; }
.track { display: flex; height: 27px; flex: none; border-top: 1px solid #666; padding-top: 1px; margin-top: 1px; }
.curve { width: 43px; }
.curve svg { width: 18px; height: 18px; }
.ruler { display: flex; justify-content: space-between; width: 89%; padding: 0 7px 0 10px; background: #c9c9c9; }
.ruler i { position: relative; flex: none; width: 1px; height: 11px; background: #777; font-style: normal; }
.ruler .ten { height: 24px; }
.ruler span { position: absolute; top: 11px; left: -14px; width: 30px; text-align: center; z-index: 1; }
.ruler .ten:first-child::before { content: ""; position: absolute; left: -4px; top: -1px; width: 8px; height: 25px; background: #8f8fc4; border: 1px solid #7676a8; }

.panel { display: flex; flex-direction: column; min-height: 0; padding: 3px 4px 0 3px; border-bottom: 1px solid #777; }
.tabs { display: flex; height: 25px; flex: none; border-bottom: 1px solid #e4e4e4; }
.tabs button { width: 29px; height: 24px; border: solid; border-width: 1px 1px 0; border-color: #e4e4e4 #777 #777 #e4e4e4; }
.tabs svg { width: 29px; height: 24px; }
.tabs .sel { background: #cacaca; }
.namerow { display: flex; gap: 4px; margin: 6px; height: 19px; flex: none; }
.namerow input { flex: 1; min-width: 0; }
input[type=text] { padding: 0 3px 1px; background: #e2e2e2; border: 1px solid #e8e8e8; border-top: 2px solid #333; border-left: 2px solid #333; }
.swatch { width: 16px; background: #c8c88c; border: 1px solid #888; border-right-color: #eee; border-bottom-color: #eee; }
.modlist { height: 23px; margin: 0 5px 5px 6px; flex: none; }
.stack { height: 126px; margin: 0 7px 0 6px; flex: none; list-style: none; background: #e2e2e2; border: 1px solid #f4f4f4; border-top-color: #888; border-left: 2px solid #777; }
.stack li { display: flex; align-items: center; gap: 7px; height: 17px; padding-left: 5px; border-bottom: 1px solid #888; }
.stack .cur { padding-left: 9px; height: 16px; background: #737373; border: 0; }
.bulb { width: 10px; height: 13px; }
.stack b { width: 9px; height: 9px; background: #000; color: #fff; font: bold 10px/8px "Liberation Sans", Arial, sans-serif; text-align: center; }
.stacktools { display: flex; align-items: center; justify-content: space-between; height: 33px; margin: 0 15px 0 12px; flex: none; }
.stacktools button { width: 18px; height: 24px; }
.stacktools svg { width: 18px; height: 18px; }
.stacktools .down { width: 24px; border: 1px solid #777; border-right-color: #eee; border-bottom-color: #eee; }
.rollouts { flex: 1; margin: 14px 2px 4px 0; padding: 6px 5px 6px 8px; border: 1px solid #e0e0e0; border-left-color: #888; border-top-color: #888; box-shadow: 0 -6px #c0c0c0, 0 -8px #222; }
.rollout { display: flex; flex-direction: column; height: 153px; margin: 0 0 0 -2px; padding: 0 3px; border: 1px solid #777; border-top: 0; background: linear-gradient(#c0c0c0 6px, transparent 6px); }
.head { position: relative; height: 15px; width: 100%; border: 1px solid #000; border-width: 2px 1px 1px; background: #aaa; }
.head span { position: absolute; left: 5px; top: -2px; }
fieldset { position: relative; height: 57px; margin: 8px 4px 0 1px; padding: 13px 0 0 20px; border: 1px solid #888; }
legend { position: absolute; left: 5px; top: -7px; padding: 0 3px; background: #c0c0c0; }
.axes { display: flex; gap: 10px; }
label { display: flex; align-items: center; white-space: nowrap; }
.axes label { gap: 6px; width: 28px; }
[type=radio] { width: 10px; height: 10px; flex: none; border: 1px solid #777; border-right-color: #f4f4f4; border-bottom-color: #f4f4f4; border-radius: 50%; background: #ddd; }
[type=radio]:checked { background: radial-gradient(#000 0 2px, #ddd 3px); }
[type=checkbox] { display: block; position: relative; width: 12px; height: 12px; flex: none; border: 1px solid #eee; border-top-color: #333; border-left-color: #333; background: #e6e6e6; }
[type=checkbox]:checked::after { content: ""; position: absolute; left: 3px; top: 0; width: 4px; height: 7px; border: solid #000; border-width: 0 2px 2px 0; transform: rotate(42deg); }
.flip { gap: 6px; margin: 6px 0 0 10px; }
.opt { gap: 6px; margin: 6px 0 0 10px; height: 14px; }
.opt + .opt { margin-top: 5px; }
.thresh { display: flex; align-items: center; margin: 5px 0 0 21px; }
.thresh input { width: 53px; height: 16px; margin: 0 2px 0 1px; }
.spin { position: relative; width: 11px; height: 16px; border: 1px solid #777; border-top-color: #eee; border-left-color: #eee; }
.spin::before, .spin::after { content: ""; position: absolute; left: 1px; border: 3px solid transparent; }
.spin::before { top: 3px; border-bottom-color: #000; border-top: 0; }
.spin::after { bottom: 3px; border-top-color: #000; border-bottom: 0; }

.callout { position: absolute; right: 76px; top: 300px; width: 198px; height: 66px; pointer-events: none; z-index: 2; }
.callout text { font: bold 30px "DejaVu Sans", sans-serif; fill: #00ff10; }

.status { display: flex; height: 50px; flex: none; padding: 3px 4px 1px 2px; border-top: 1px solid #ddd; }
.listener { display: flex; flex-direction: column; gap: 2px; width: 97px; margin-right: 5px; }
.listener input { height: 22px; width: 100%; background: #c8c8c8; border: 1px solid #888; border-right-color: #f4f4f4; border-bottom: 2px solid #f4f4f4; }
.info { flex: 1; min-width: 0; padding-left: 2px; border-left: 1px solid #888; display: flex; flex-direction: column; gap: 4px; }
.box, output { height: 21px; padding: 3px 0 0 5px; white-space: nowrap; overflow: hidden; border: 1px solid #777; border-right-color: #eee; border-bottom-color: #eee; }
.coords { display: flex; align-items: center; height: 21px; }
.coords output { width: 72px; }
.coords button:not(.spin) { width: 27px; }
.coords button:not(.spin) svg { width: 12px; height: 14px; }
.coords .abs svg, .coords button.abs:not(.spin) svg { width: 15px; height: 15px; }
.coords label { padding: 0 1px 0 2px; }
.coords input { flex: 1; min-width: 0; height: 20px; margin-right: 1px; }
.coords .spin { height: 16px; }
.gridinfo { display: flex; flex-direction: column; gap: 4px; width: 99px; margin: 0 2px 0 3px; }
.raised { border: 1px solid #777; border-top-color: #e4e4e4; border-left-color: #e4e4e4; outline: 0; }
.key { width: 43px; height: 43px; }
.key svg { width: 24px; height: 12px; }
.keys { display: flex; flex-direction: column; gap: 2px; width: 48px; margin: 0 3px; }
.keys button, .filters button { width: 100%; height: 21px; }
.filters { display: flex; flex-direction: column; gap: 2px; width: 115px; }
.filters .combo { height: 21px; }
.play { display: flex; flex-direction: column; width: 132px; padding: 0 5px 0 6px; }
.play div { display: flex; align-items: center; justify-content: space-between; height: 23px; }
.play button:not(.spin) { width: 22px; height: 23px; }
.play svg, .nav svg { width: 23px; height: 23px; }
.play .sep { width: 2px; }
.play .sep::after { margin: 0; }
.play input { width: 64px; height: 20px; }
.sep.tall { height: 42px; width: 2px; }
.sep.tall::after { margin: 0; }
.nav { display: grid; grid-template-columns: repeat(4, 23px); grid-auto-rows: 23px; }
.taskbar { height: 2px; flex: none; background: linear-gradient(90deg, #2e8b2e 100px, #2070d8 100px); }
```
